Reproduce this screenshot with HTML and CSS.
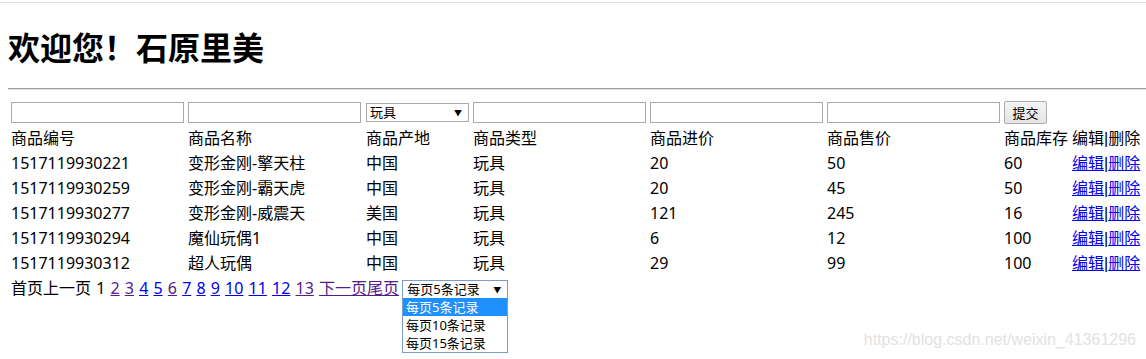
FILE: index.html
```html
<!DOCTYPE html>
<html lang="zh-CN">
<head>
    <meta charset="UTF-8">
    <title>商品列表</title>
    <link rel="stylesheet" href="styles.css">
</head>
<body>

    <div class="topline"></div>
    <h1 class="welcome">欢迎您！石原里美</h1>
    <hr class="divider">

    <table class="goods">
        <tr class="search-row">
            <td class="c-id"><input type="text" class="field"></td>
            <td class="c-name"><input type="text" class="field"></td>
            <td class="c-place">
                <div class="fake-select small">玩具<span class="arrow">▼</span></div>
            </td>
            <td class="c-type"><input type="text" class="field"></td>
            <td class="c-in"><input type="text" class="field"></td>
            <td class="c-out"><input type="text" class="field"></td>
            <td class="c-stock"><button class="submit-btn">提交</button></td>
            <td class="c-ops"></td>
        </tr>
        <tr>
            <td>商品编号</td>
            <td>商品名称</td>
            <td>商品产地</td>
            <td>商品类型</td>
            <td>商品进价</td>
            <td>商品售价</td>
            <td>商品库存</td>
            <td>编辑<span class="sep">|</span>删除</td>
        </tr>
        <tr>
            <td>1517119930221</td>
            <td>变形金刚-擎天柱</td>
            <td>中国</td>
            <td>玩具</td>
            <td>20</td>
            <td>50</td>
            <td>60</td>
            <td><a href="#">编辑</a><span class="sep">|</span><a href="#">删除</a></td>
        </tr>
        <tr>
            <td>1517119930259</td>
            <td>变形金刚-霸天虎</td>
            <td>中国</td>
            <td>玩具</td>
            <td>20</td>
            <td>45</td>
            <td>50</td>
            <td><a href="#">编辑</a><span class="sep">|</span><a href="#">删除</a></td>
        </tr>
        <tr>
            <td>1517119930277</td>
            <td>变形金刚-威震天</td>
            <td>美国</td>
            <td>玩具</td>
            <td>121</td>
            <td>245</td>
            <td>16</td>
            <td><a href="#">编辑</a><span class="sep">|</span><a href="#">删除</a></td>
        </tr>
        <tr>
            <td>1517119930294</td>
            <td>魔仙玩偶1</td>
            <td>中国</td>
            <td>玩具</td>
            <td>6</td>
            <td>12</td>
            <td>100</td>
            <td><a href="#">编辑</a><span class="sep">|</span><a href="#">删除</a></td>
        </tr>
        <tr>
            <td>1517119930312</td>
            <td>超人玩偶</td>
            <td>中国</td>
            <td>玩具</td>
            <td>29</td>
            <td>99</td>
            <td>100</td>
            <td><a href="#">编辑</a><span class="sep">|</span><a href="#">删除</a></td>
        </tr>
        <tr>
            <td colspan="8" class="pager">
                首页上一页 1
                <a href="#" class="visited">2</a>
                <a href="#" class="visited">3</a>
                <a href="#">4</a>
                <a href="#">5</a>
                <a href="#" class="visited">6</a>
                <a href="#">7</a>
                <a href="#">8</a>
                <a href="#">9</a>
                <a href="#">10</a>
                <a href="#">11</a>
                <a href="#">12</a>
                <a href="#" class="visited">13</a>
                <a href="#" class="visited">下一页尾页</a>
                <div class="page-size">
                    <div class="fake-select wide">每页5条记录<span class="arrow">▼</span></div>
                </div>
            </td>
        </tr>
    </table>

    <!-- open dropdown of the page-size select -->
    <div class="size-list">
        <div class="size-item chosen">每页5条记录</div>
        <div class="size-item">每页10条记录</div>
        <div class="size-item">每页15条记录</div>
    </div>

    <p class="watermark">https://blog.csdn.net/weixin_41361296</p>

</body>
</html>
```

FILE: styles.css
```css
body {
    margin: 0;
    font-family: "Noto Sans", "Noto Sans CJK SC", sans-serif;
    color: #000;
    background: #fff;
}

.topline {
    height: 1px;
    margin-top: 2px;
    background: #dcdce6;
}

.welcome {
    margin: 23px 8px 0;
    font-size: 32px;
    line-height: 40px;
    font-family: "Noto Sans CJK SC", sans-serif;
    font-weight: bold;
}

.divider {
    margin: 22px 0 7px 8px;
    border: none;
    border-top: 1px solid #a0a0a0;
    border-bottom: 1px solid #e0e0e0;
}

/* table */
.goods {
    margin-left: 8px;
    border-spacing: 2px;
    font-size: 16px;
    line-height: 21px;
}
.goods td { padding: 1px; white-space: nowrap; vertical-align: middle; }
.c-id, .c-type, .c-in, .c-out { width: 173px; }
.c-name { width: 174px; }
.c-place { width: 103px; }
.c-stock { width: 64px; }
.c-ops { width: 68px; }

.search-row td { height: 24px; }

.field {
    box-sizing: border-box;
    width: 173px;
    height: 21px;
    margin: 0;
    border: 1px solid #a9a9a9;
    padding: 1px 2px;
    display: block;
}

.fake-select {
    box-sizing: border-box;
    display: flex;
    align-items: center;
    justify-content: space-between;
    height: 19px;
    border: 1px solid #a9a9a9;
    background: #fff;
    font-size: 13px;
    line-height: 17px;
    padding: 0 6px 0 3px;
    color: #000;
}
.fake-select.small { width: 103px; }
.fake-select.wide { width: 106px; padding-left: 4px; border-color: #7a9cc8; }
.arrow { font-size: 8px; }

.sep { font-family: "Liberation Sans", Arial, sans-serif; }

.submit-btn {
    box-sizing: border-box;
    width: 43px;
    height: 23px;
    margin: 0;
    padding: 0;
    font-family: "Noto Sans CJK SC", sans-serif;
    font-size: 13px;
    color: #000;
    background: linear-gradient(#f4f4f4, #e4e4e4);
    border: 1px solid #adadad;
    border-radius: 2px;
    display: block;
}

a { color: #0000ee; }
a.visited { color: #551a8b; }

/* pager */
.pager { word-spacing: 1px; }
.page-size {
    display: inline-block;
    vertical-align: middle;
    margin-left: -2px;
    word-spacing: 0;
}
.size-list {
    position: absolute;
    top: 298px;
    left: 402px;
    box-sizing: border-box;
    width: 106px;
    border: 1px solid #7a9cc8;
    border-top: none;
    background: #fff;
    font-size: 13px;
    line-height: 18px;
}
.size-item { height: 18px; padding-left: 3px; color: #000; }
.size-item.chosen { background: #1e90ff; color: #fff; }

.watermark {
    position: absolute;
    top: 331px;
    right: 10px;
    margin: 0;
    font-family: "Liberation Sans", Arial, sans-serif;
    font-size: 16px;
    color: #e2e2e2;
}
```
